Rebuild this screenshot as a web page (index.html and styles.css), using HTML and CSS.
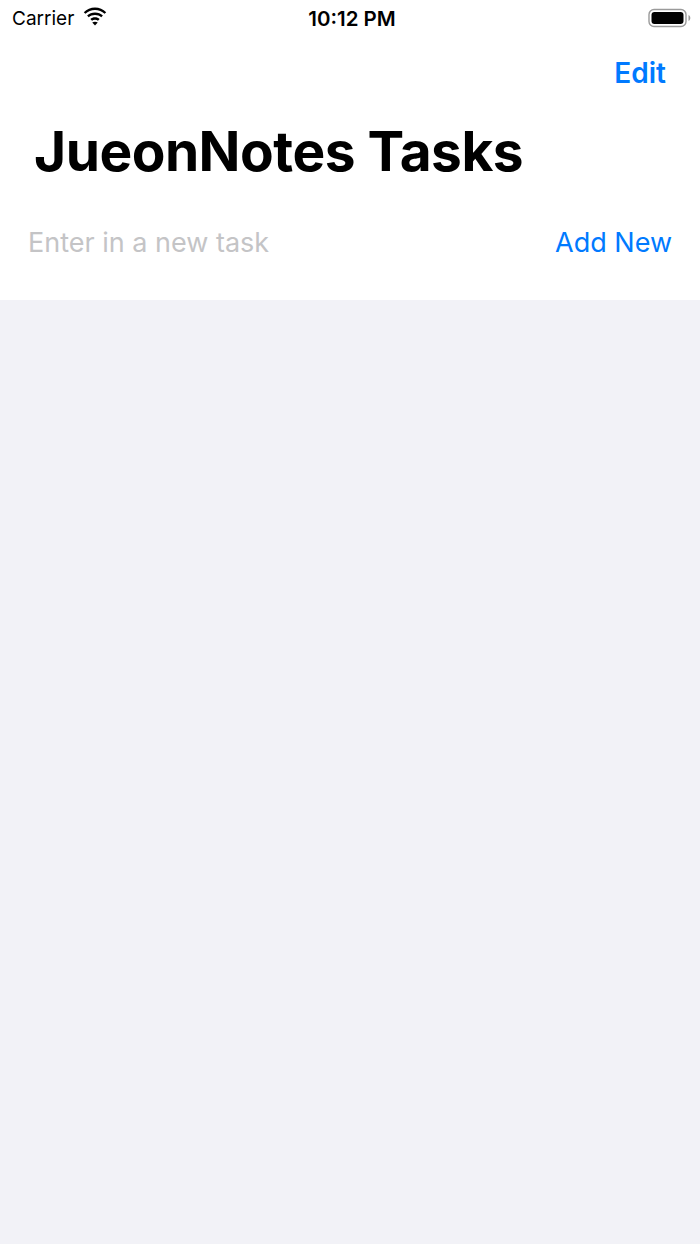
FILE: index.html
```html
<!DOCTYPE html>
<html>
<head>
<meta charset="utf-8">
<link rel="stylesheet" href="styles.css">
</head>
<body>
<div class="screen">
  <header class="top">
    <div class="status">
      <div class="status-left">
        <span class="carrier">Carrier</span>
        <svg class="wifi" width="26" height="19" viewBox="0 0 26 20">
          <path d="M13 3.2c3.9 0 7.4 1.5 10.1 4l1.7-1.8C21.6 2.4 17.5 0.6 13 0.6S4.4 2.4 1.2 5.4l1.7 1.8c2.7-2.5 6.2-4 10.1-4z" fill="#000"/>
          <path d="M13 8.3c2.5 0 4.8 0.9 6.6 2.5l1.7-1.8C19.1 7 16.2 5.8 13 5.8S6.9 7 4.7 9l1.7 1.8C8.2 9.2 10.5 8.3 13 8.3z" fill="#000"/>
          <path d="M13 13.3c1.2 0 2.3 0.4 3.1 1.1l1.8-1.8C16.6 11.4 14.9 10.8 13 10.8s-3.6 0.6-4.9 1.8l1.8 1.8c0.8-0.7 1.9-1.1 3.1-1.1z" fill="#000"/>
          <path d="M13 19.4l2.9-3c-0.8-0.7-1.8-1-2.9-1s-2.1 0.3-2.9 1z" fill="#000"/>
        </svg>
      </div>
      <div class="time">10:12 PM</div>
      <div class="status-right">
        <svg class="battery" width="44" height="20" viewBox="0 0 44 20">
          <rect x="1" y="1.5" width="37" height="17" rx="5" fill="none" stroke="#9a9a9a" stroke-width="1.4"/>
          <rect x="3.5" y="4" width="32" height="12" rx="3" fill="#000"/>
          <path d="M40.5 7v6c1.2-0.5 1.8-1.6 1.8-3s-0.6-2.5-1.8-3z" fill="#9a9a9a"/>
        </svg>
      </div>
    </div>
    <div class="navbar">
      <span class="edit">Edit</span>
    </div>
    <h1 class="title">JueonNotes Tasks</h1>
    <div class="entry">
      <span class="placeholder">Enter in a new task</span>
      <span class="add">Add New</span>
    </div>
  </header>
  <main class="list"></main>
</div>
</body>
</html>
```

FILE: styles.css
```css
* { box-sizing: border-box; }
html, body { margin: 0; padding: 0; }
body {
  width: 700px;
  height: 1244px;
  background: #f2f2f7;
  font-family: Inter, "Liberation Sans", sans-serif;
  color: #000;
  overflow: hidden;
}
.screen {
  display: flex;
  flex-direction: column;
  height: 1244px;
}
.top {
  background: #fff;
  height: 300px;
  display: flex;
  flex-direction: column;
}
.status {
  height: 36px;
  display: flex;
  align-items: center;
  justify-content: space-between;
  padding: 0 8px 0 12px;
}
.status-left {
  display: flex;
  align-items: center;
  gap: 8px;
  width: 200px;
}
.carrier {
  font-size: 19px;
}
.wifi { margin-top: -3px; }
.time {
  font-size: 20.5px;
  font-weight: 600;
}
.status-right {
  width: 200px;
  display: flex;
  justify-content: flex-end;
}
.navbar {
  height: 80px;
  display: flex;
  justify-content: flex-end;
  align-items: flex-start;
  padding: 21px 34px 0 0;
}
.edit {
  color: #007aff;
  font-size: 28px;
  font-weight: 600;
  line-height: 32px;
}
.title {
  margin: 0;
  padding-left: 34px;
  font-size: 55px;
  font-weight: 700;
  line-height: 70px;
  letter-spacing: -0.5px;
}
.entry {
  display: flex;
  justify-content: space-between;
  align-items: center;
  padding: 40px 28px 0 28px;
}
.placeholder {
  color: #c4c4c6;
  font-size: 27px;
}
.add {
  color: #007aff;
  font-size: 27px;
}
.list { flex: 1; }
```
